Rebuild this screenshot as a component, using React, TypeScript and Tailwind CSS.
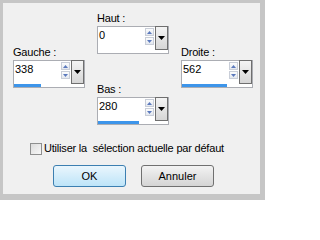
import React from "react";

const font = { fontFamily: '"Liberation Sans", Arial, sans-serif' };

function SpinButton({ up }: { up?: boolean }) {
  return (
    <div className="flex h-[8px] w-[9px] items-center justify-center border border-[#c9ced8] bg-gradient-to-b from-[#fbfcfd] to-[#e4e8ef]">
      <svg width="5" height="3" viewBox="0 0 5 3">
        {up ? (
          <polygon points="0,3 5,3 2.5,0" fill="#5b79bd" />
        ) : (
          <polygon points="0,0 5,0 2.5,3" fill="#5b79bd" />
        )}
      </svg>
    </div>
  );
}

function Field({ label, value, bar }: { label: string; value: string; bar: number }) {
  return (
    <div className="flex w-[72px] flex-col">
      <div className="h-[14px] text-[11px] leading-[12px] tracking-[-0.2px] text-black">{label}</div>
      <div className="flex h-[28px] flex-col border border-[#abadb3] bg-white">
        <div className="flex h-[23px]">
          <div className="flex-1 pl-[1px] pt-[2px] text-[11px] leading-[13px] text-black">{value}</div>
          <div className="flex w-[10px] flex-col gap-[1px] pt-[1px]">
            <SpinButton up />
            <SpinButton />
          </div>
          <div className="-mt-[1px] flex h-[24px] w-[13px] items-center justify-center border border-[#6f6f6f] bg-gradient-to-b from-[#f4f4f4] to-[#d6d6d6]">
            <svg width="7" height="4" viewBox="0 0 7 4">
              <polygon points="0,0 7,0 3.5,4" fill="#000" />
            </svg>
          </div>
        </div>
        <div className="flex h-[3px]">
          <div className="h-[3px] bg-[#3d95ea]" style={{ width: bar }} />
        </div>
      </div>
    </div>
  );
}

export default function App() {
  return (
    <div className="h-[200px] w-[265px] bg-[#c6c6c6] pl-[3px] pt-[3px]" style={font}>
      <div className="flex h-[191px] w-[257px] flex-col bg-[#f0f0f0]">
        <div className="flex gap-[12px] pl-[10px] pt-[9px]">
          <div className="mt-[34px]">
            <Field label="Gauche :" value="338" bar={27} />
          </div>
          <div className="flex flex-col">
            <Field label="Haut :" value="0" bar={0} />
            <div className="mt-[29px]">
              <Field label="Bas :" value="280" bar={41} />
            </div>
          </div>
          <div className="mt-[34px]">
            <Field label="Droite :" value="562" bar={45} />
          </div>
        </div>

        <div className="mt-[17px] flex items-center gap-[2px] pl-[27px]">
          <div className="h-[12px] w-[12px] border border-[#8e8f8f] bg-gradient-to-br from-[#dcdcdc] to-[#f8f8f8]" />
          <span className="whitespace-pre text-[11px] leading-[13px] tracking-[-0.2px] text-black">
            Utiliser la  sélection actuelle par défaut
          </span>
        </div>

        <div className="mt-[10px] flex gap-[15px] pl-[50px]">
          <button className="h-[22px] w-[73px] rounded-[3px] border border-[#3c7fb1] bg-gradient-to-b from-[#eaf6fd] to-[#bde4f8] text-[11px] text-black">
            OK
          </button>
          <button className="h-[22px] w-[73px] rounded-[3px] border border-[#707070] bg-gradient-to-b from-[#f3f3f3] to-[#d4d4d4] text-[11px] text-black">
            Annuler
          </button>
        </div>
      </div>
    </div>
  );
}
